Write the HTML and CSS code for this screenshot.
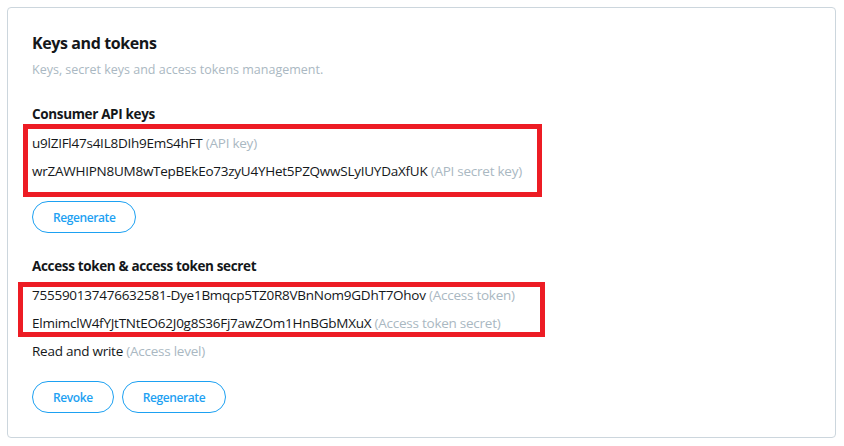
FILE: index.html
```html
<!DOCTYPE html>
<html>
<head>
<meta charset="utf-8">
<link rel="stylesheet" href="styles.css">
</head>
<body>
<div class="page">
  <section class="card">
    <h1 class="title">Keys and tokens</h1>
    <p class="subtitle">Keys, secret keys and access tokens management.</p>

    <h2 class="heading">Consumer API keys</h2>
    <div class="lines">
      <div class="line">u9lZIFl47s4IL8DIh9EmS4hFT <span class="note">(API key)</span></div>
      <div class="line">wrZAWHIPN8UM8wTepBEkEo73zyU4YHet5PZQwwSLyIUYDaXfUK <span class="note">(API secret key)</span></div>
    </div>
    <div class="actions">
      <button class="btn">Regenerate</button>
    </div>

    <h2 class="heading second">Access token &amp; access token secret</h2>
    <div class="lines">
      <div class="line">755590137476632581-Dye1Bmqcp5TZ0R8VBnNom9GDhT7Ohov <span class="note">(Access token)</span></div>
      <div class="line">ElmimclW4fYJtTNtEO62J0g8S36Fj7awZOm1HnBGbMXuX <span class="note">(Access token secret)</span></div>
      <div class="line">Read and write <span class="note">(Access level)</span></div>
    </div>
    <div class="actions">
      <button class="btn">Revoke</button>
      <button class="btn">Regenerate</button>
    </div>

    <div class="mark mark-one"></div>
    <div class="mark mark-two"></div>
  </section>
</div>
</body>
</html>
```

FILE: styles.css
```css
* { box-sizing: border-box; }
html, body { margin: 0; padding: 0; background: #ffffff; }
body {
  font-family: "Open Sans", "Noto Sans", sans-serif;
  color: #14171a;
}
.page { padding: 7px 8px 8px 7px; }
.card {
  position: relative;
  height: 431px;
  border: 1px solid #ccd6dd;
  border-radius: 4px;
  padding: 23px 24px 24px 24px;
}
.title {
  margin: 0;
  font-size: 16px;
  line-height: 24px;
  font-weight: 700;
  letter-spacing: -0.4px;
}
.subtitle {
  margin: 5px 0 0 0;
  font-size: 12.5px;
  line-height: 20px;
  color: #aab8c2;
}
.heading {
  margin: 24px 0 0 0;
  font-size: 13.5px;
  line-height: 20px;
  font-weight: 700;
  letter-spacing: -0.35px;
}
.heading.second { margin-top: 23px; }
.lines { margin-top: 5px; }
.line {
  font-size: 13.5px;
  line-height: 28px;
  letter-spacing: -0.25px;
  white-space: nowrap;
}
.note { color: #aab8c2; }
.actions {
  display: flex;
  gap: 8px;
  margin-top: 16px;
}
.btn {
  height: 32px;
  padding: 0 20px;
  border: 1px solid #1da1f2;
  border-radius: 100px;
  background: #ffffff;
  color: #1da1f2;
  font-family: inherit;
  font-size: 12px;
  font-weight: 600;
  letter-spacing: -0.4px;
}
.mark {
  position: absolute;
  border: 5px solid #ed1c24;
}
.mark-one { left: 15px; top: 116px; width: 519px; height: 73px; }
.mark-two { left: 10px; top: 274px; width: 527px; height: 55px; }
```
